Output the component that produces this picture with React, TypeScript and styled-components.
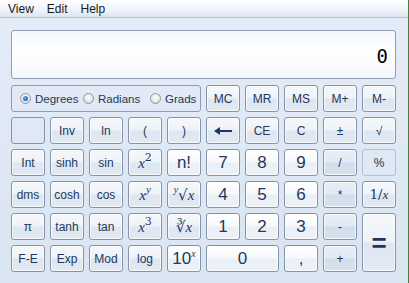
import styled, { createGlobalStyle, css } from 'styled-components';

const GlobalStyle = createGlobalStyle`
  html, body {
    margin: 0;
    padding: 0;
    width: 409px;
    height: 283px;
    overflow: hidden;
  }
  body {
    font-family: "Liberation Sans", "DejaVu Sans", sans-serif;
    color: #1e395b;
  }
`;

const Window = styled.div`
  width: 408px;
  height: 283px;
  border-right: 1px solid #4e7a45;
  background: linear-gradient(to bottom, #e4ecf7 0%, #dae5f2 100%);
  display: flex;
  flex-direction: column;
`;

const MenuBar = styled.div`
  height: 17px;
  display: flex;
  align-items: center;
  gap: 11px;
  padding-left: 7px;
  background: linear-gradient(to bottom, #fdfeff 0%, #eef2f9 60%, #dde5f0 100%);
  border-bottom: 1px solid #b3bfcf;
  font-size: 12px;
  color: #1a1a1a;
`;

const MenuItem = styled.span`
  padding: 0 1px;
`;

const Body = styled.div`
  padding: 12px 12px 0 11px;
  display: flex;
  flex-direction: column;
  gap: 6px;
`;

const Display = styled.div`
  height: 49px;
  box-sizing: border-box;
  border: 1px solid #8e9db3;
  border-radius: 3px;
  background: linear-gradient(to bottom, #f3f7fc 0%, #ffffff 45%, #f4f8fc 100%);
  display: flex;
  align-items: center;
  justify-content: flex-end;
  padding: 2px 7px 0 0;
`;

const Readout = styled.span`
  font-family: "DejaVu Sans Mono", "Liberation Mono", monospace;
  font-size: 19px;
  line-height: 20px;
  color: #000;
`;

const Keypad = styled.div`
  display: grid;
  grid-template-columns: repeat(10, 34px);
  grid-auto-rows: 27px;
  column-gap: 5px;
  row-gap: 5px;
`;

const RadioGroup = styled.div`
  grid-column: span 5;
  border: 1px solid #8e9db3;
  border-radius: 3px;
  display: flex;
  align-items: center;
  padding-left: 8px;
  font-size: 11.5px;
`;

const RadioItem = styled.label<{ $w: number }>`
  display: flex;
  align-items: center;
  gap: 4px;
  width: ${(p) => p.$w}px;
  color: #1e395b;
`;

const RadioDot = styled.span<{ $on?: boolean }>`
  width: 11px;
  height: 11px;
  border-radius: 50%;
  border: 1px solid #8f96a0;
  box-sizing: border-box;
  background: radial-gradient(circle at 50% 40%, #ffffff 0%, #e4e7ea 60%, #c9ced4 100%);
  display: flex;
  align-items: center;
  justify-content: center;
  ${(p) =>
    p.$on &&
    css`
      &::after {
        content: '';
        width: 5px;
        height: 5px;
        border-radius: 50%;
        background: radial-gradient(circle at 40% 35%, #6fb6f5 0%, #1b5fae 70%, #0d3f7e 100%);
      }
    `}
`;

type Kind = 'fn' | 'digit' | 'op' | 'empty' | 'faded';

const fills: Record<Kind, string> = {
  fn: 'linear-gradient(to bottom, #f6f8fb 0%, #eef2f8 48%, #dde6f1 52%, #e2eaf4 100%)',
  digit: 'linear-gradient(to bottom, #ffffff 0%, #f7f9fc 48%, #e9eff7 52%, #edf2f9 100%)',
  op: 'linear-gradient(to bottom, #e8eef6 0%, #e1e9f3 48%, #d3deec 52%, #d8e2ef 100%)',
  empty: 'transparent',
  faded: '#dfe8f3',
};

const Key = styled.div<{ $kind?: Kind; $col?: number; $row?: number }>`
  grid-column: span ${(p) => p.$col || 1};
  grid-row: span ${(p) => p.$row || 1};
  box-sizing: border-box;
  border: 1px solid ${(p) => (p.$kind === 'faded' ? '#b3c0d1' : '#8594a8')};
  border-radius: 3px;
  background: ${(p) => fills[p.$kind || 'fn']};
  box-shadow: ${(p) =>
    p.$kind === 'empty' || p.$kind === 'faded' ? 'none' : 'inset 0 0 0 1px rgba(255,255,255,0.7)'};
  display: flex;
  align-items: center;
  justify-content: center;
  font-size: ${(p) => (p.$kind === 'digit' ? '17px' : '12px')};
  color: #1e395b;
  white-space: nowrap;
`;

const Math = styled.span<{ $size?: number }>`
  font-family: "DejaVu Serif", "Liberation Serif", serif;
  font-size: ${(p) => p.$size || 15}px;
`;

const Ital = styled.i`
  font-family: "Liberation Serif", "DejaVu Serif", serif;
`;

const Sup = styled.sup<{ $size?: number }>`
  font-size: ${(p) => p.$size || 11}px;
  vertical-align: 0;
  position: relative;
  top: -7px;
`;

const Equals = styled.span`
  font-size: 26px;
  font-weight: bold;
  line-height: 1;
`;

const BackArrow = () => (
  <svg width="20" height="10" viewBox="0 0 20 10">
    <path d="M1 5 L7 1 L7 4 L19 4 L19 6 L7 6 L7 9 Z" fill="#1e395b" />
  </svg>
);

export default function App() {
  return (
    <>
      <GlobalStyle />
      <Window>
        <MenuBar>
          <MenuItem>View</MenuItem>
          <MenuItem>Edit</MenuItem>
          <MenuItem>Help</MenuItem>
        </MenuBar>
        <Body>
          <Display>
            <Readout>0</Readout>
          </Display>
          <Keypad>
            <RadioGroup>
              <RadioItem $w={63}>
                <RadioDot $on />
                Degrees
              </RadioItem>
              <RadioItem $w={67}>
                <RadioDot />
                Radians
              </RadioItem>
              <RadioItem $w={50}>
                <RadioDot />
                Grads
              </RadioItem>
            </RadioGroup>
            <Key>MC</Key>
            <Key>MR</Key>
            <Key>MS</Key>
            <Key>M+</Key>
            <Key>M-</Key>

            <Key $kind="empty" />
            <Key>Inv</Key>
            <Key>ln</Key>
            <Key>(</Key>
            <Key>)</Key>
            <Key>
              <BackArrow />
            </Key>
            <Key>CE</Key>
            <Key>C</Key>
            <Key>±</Key>
            <Key>√</Key>

            <Key>Int</Key>
            <Key>sinh</Key>
            <Key>sin</Key>
            <Key>
              <Math>
                <Ital>x</Ital>
                <Sup>2</Sup>
              </Math>
            </Key>
            <Key $kind="digit">n!</Key>
            <Key $kind="digit">7</Key>
            <Key $kind="digit">8</Key>
            <Key $kind="digit">9</Key>
            <Key $kind="op">/</Key>
            <Key $kind="faded">%</Key>

            <Key>dms</Key>
            <Key>cosh</Key>
            <Key>cos</Key>
            <Key>
              <Math>
                <Ital>x</Ital>
                <Sup>
                  <Ital>y</Ital>
                </Sup>
              </Math>
            </Key>
            <Key>
              <Math>
                <Sup $size={10}>
                  <Ital>y</Ital>
                </Sup>
                √<Ital>x</Ital>
              </Math>
            </Key>
            <Key $kind="digit">4</Key>
            <Key $kind="digit">5</Key>
            <Key $kind="digit">6</Key>
            <Key $kind="op">*</Key>
            <Key>
              <Math $size={13}>
                1/<Ital>x</Ital>
              </Math>
            </Key>

            <Key>π</Key>
            <Key>tanh</Key>
            <Key>tan</Key>
            <Key>
              <Math>
                <Ital>x</Ital>
                <Sup>3</Sup>
              </Math>
            </Key>
            <Key>
              <Math>∛<Ital>x</Ital></Math>
            </Key>
            <Key $kind="digit">1</Key>
            <Key $kind="digit">2</Key>
            <Key $kind="digit">3</Key>
            <Key $kind="op">-</Key>
            <Key $kind="fn" $row={2}>
              <Equals>=</Equals>
            </Key>

            <Key>F-E</Key>
            <Key>Exp</Key>
            <Key>Mod</Key>
            <Key>log</Key>
            <Key $kind="digit">
              <span>
                10
                <Sup $size={10}>
                  <Ital>x</Ital>
                </Sup>
              </span>
            </Key>
            <Key $kind="digit" $col={2}>
              0
            </Key>
            <Key $kind="digit">,</Key>
            <Key $kind="op">+</Key>
          </Keypad>
        </Body>
      </Window>
    </>
  );
}
